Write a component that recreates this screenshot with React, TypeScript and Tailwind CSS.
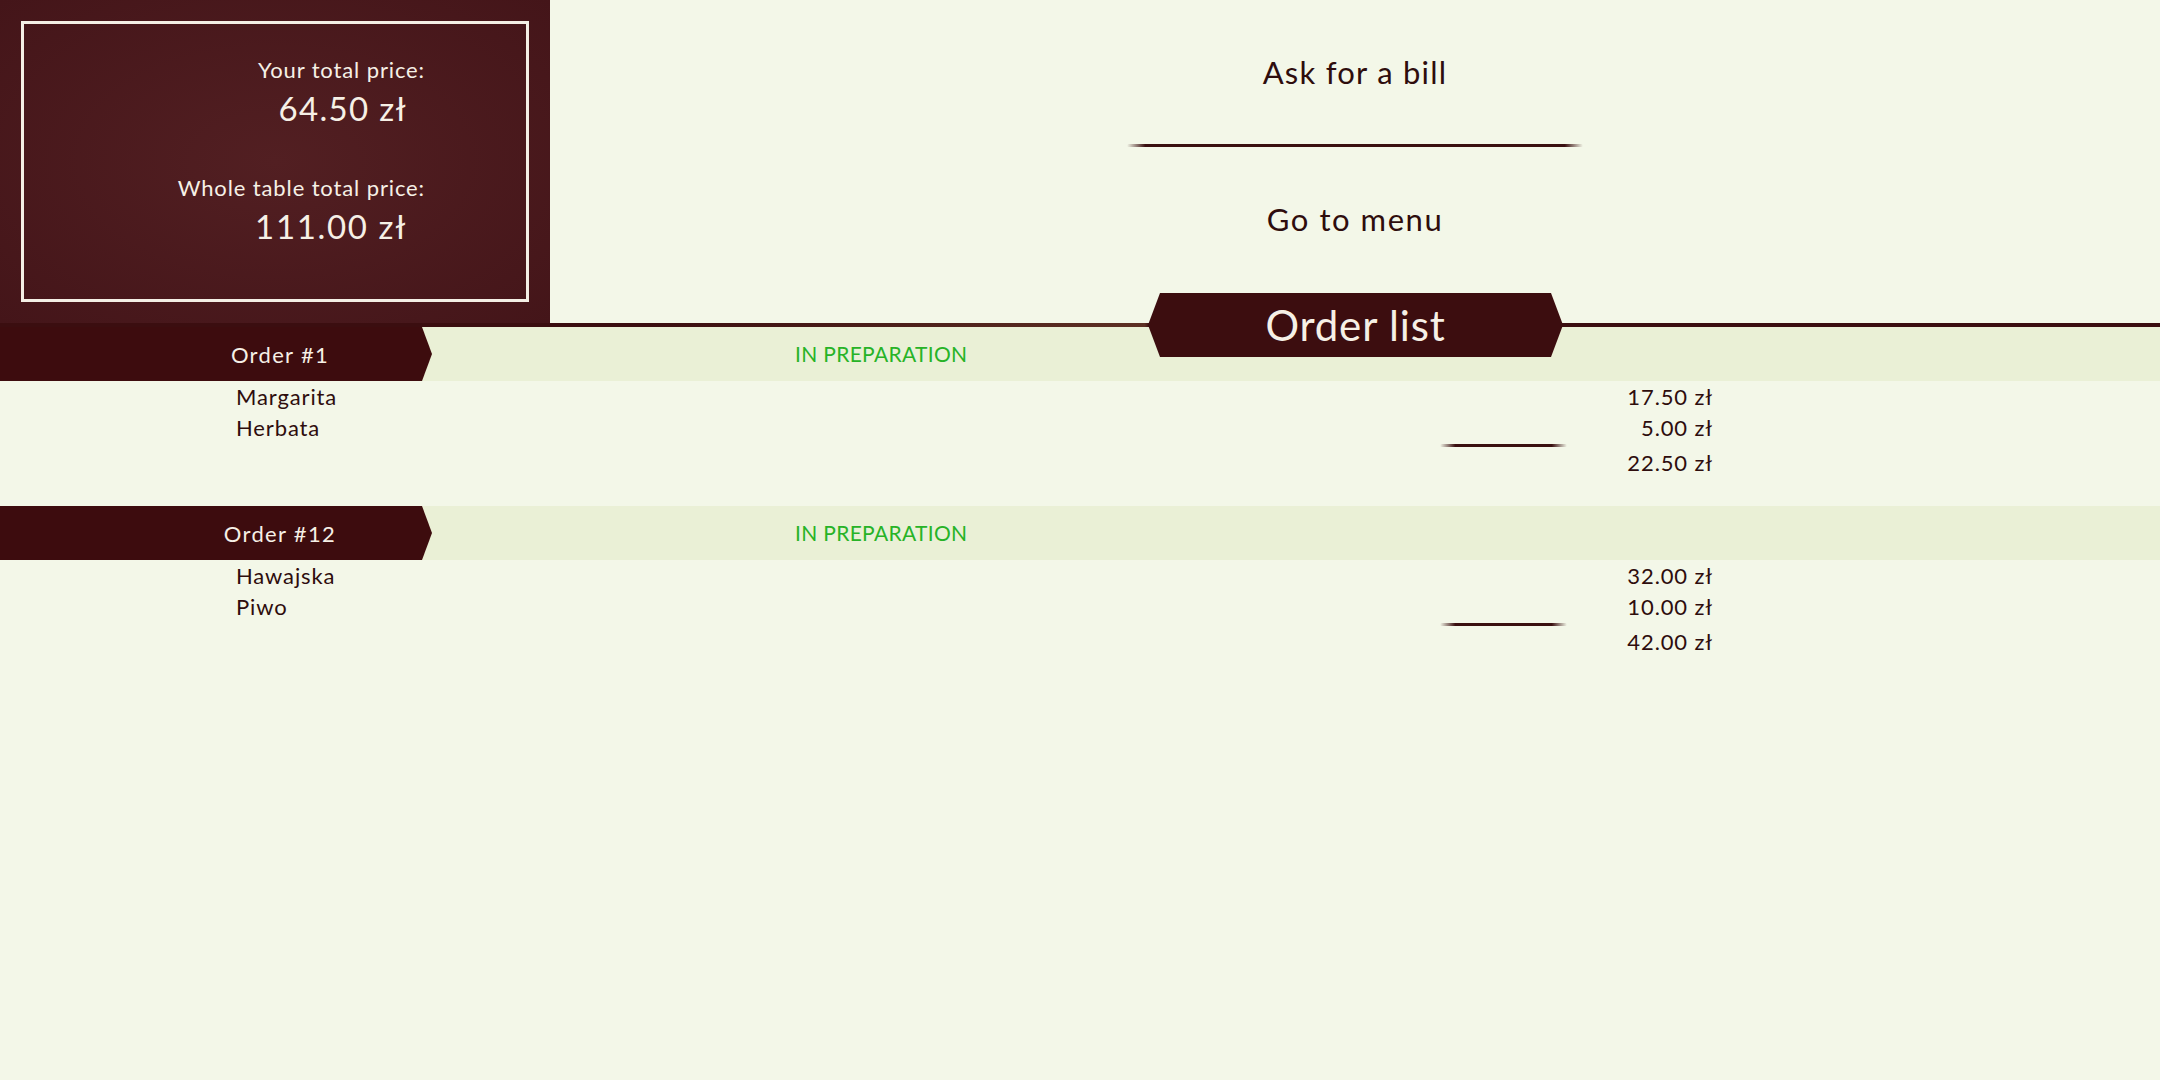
const orders = [
  {
    id: 1,
    status: "IN PREPARATION",
    items: [
      { name: "Margarita", price: 17.5 },
      { name: "Herbata", price: 5 },
    ],
  },
  {
    id: 12,
    status: "IN PREPARATION",
    items: [
      { name: "Hawajska", price: 32 },
      { name: "Piwo", price: 10 },
    ],
  },
];

const zl = (v: number) => `${v.toFixed(2)} zł`;

export default function App() {
  return (
    <div className="min-h-screen w-[2160px] bg-[#f3f7e8] font-[Lato,sans-serif] text-[#2e0d0d]">
      {/* top: totals + actions */}
      <div className="flex h-[323px]">
        <div className="w-[550px] p-[21px] bg-[radial-gradient(ellipse_at_center,#521f22_0%,#441519_100%)]">
          <div className="flex h-full flex-col items-end border-[3px] border-[#f4efe5] pt-[31px] text-[#f6f0e6]">
            <div className="pr-[101px] text-[22px] leading-[30px] tracking-[0.04em]">Your total price:</div>
            <div className="pr-[119px] text-[33px] leading-[46px] tracking-[0.04em]">64.50 zł</div>
            <div className="mt-[42px] pr-[101px] text-[22px] leading-[30px] tracking-[0.04em]">
              Whole table total price:
            </div>
            <div className="pr-[119px] text-[33px] leading-[46px] tracking-[0.05em]">111.00 zł</div>
          </div>
        </div>
        <div className="flex flex-1 flex-col items-center pt-[52px]">
          <button className="text-[31px] leading-[40px] tracking-[0.04em]">Ask for a bill</button>
          <div className="mt-[52px] h-[3px] w-[456px] rounded-full bg-[linear-gradient(to_right,transparent,#3a1010_4%,#3a1010_96%,transparent)]" />
          <button className="mt-[52px] text-[31px] leading-[40px] tracking-[0.05em]">Go to menu</button>
        </div>
      </div>

      {/* order list heading */}
      <div className="relative h-[4px] bg-[linear-gradient(to_right,#3b0e10_0%,#3b0e10_30%,#5d3024_53%,#3b0e10_53.2%,#3b0e10_100%)]">
        <div className="absolute left-[1148px] top-[-30px] z-10 flex h-[64px] w-[415px] items-center justify-center bg-[#3c0d0f] [clip-path:polygon(12px_0,403px_0,415px_50%,403px_100%,12px_100%,0_50%)]">
          <span className="text-[42px] leading-none tracking-[0.02em] text-[#f6f0e6]">Order list</span>
        </div>
      </div>

      {orders.map((order) => {
        const total = order.items.reduce((s, i) => s + i.price, 0);
        return (
          <div key={order.id} className="mb-[27px]">
            <div className="flex h-[54px] items-center bg-[#eaf0d6]">
              <div className="flex h-full w-[432px] items-center justify-center bg-[#3d0c0e] pl-[138px] pr-[10px] text-[22px] tracking-[0.06em] text-[#f6f0e6] [clip-path:polygon(0_0,422px_0,432px_50%,422px_100%,0_100%)]">
                Order #{order.id}
              </div>
              <div className="pl-[363px] text-[21px] tracking-[0.015em] text-[#27b327]">{order.status}</div>
            </div>
            <div className="w-[1713px] pl-[236px] text-[22px] tracking-[0.04em]">
              {order.items.map((item) => (
                <div key={item.name} className="flex justify-between leading-[31px]">
                  <span>{item.name}</span>
                  <span>{zl(item.price)}</span>
                </div>
              ))}
              <div className="mt-[1px] flex justify-end pr-[146px]">
                <div className="h-[3px] w-[127px] rounded-full bg-[linear-gradient(to_right,transparent,#3a1010_12%,#3a1010_88%,transparent)]" />
              </div>
              <div className="flex justify-end leading-[32px]">{zl(total)}</div>
            </div>
          </div>
        );
      })}
    </div>
  );
}
